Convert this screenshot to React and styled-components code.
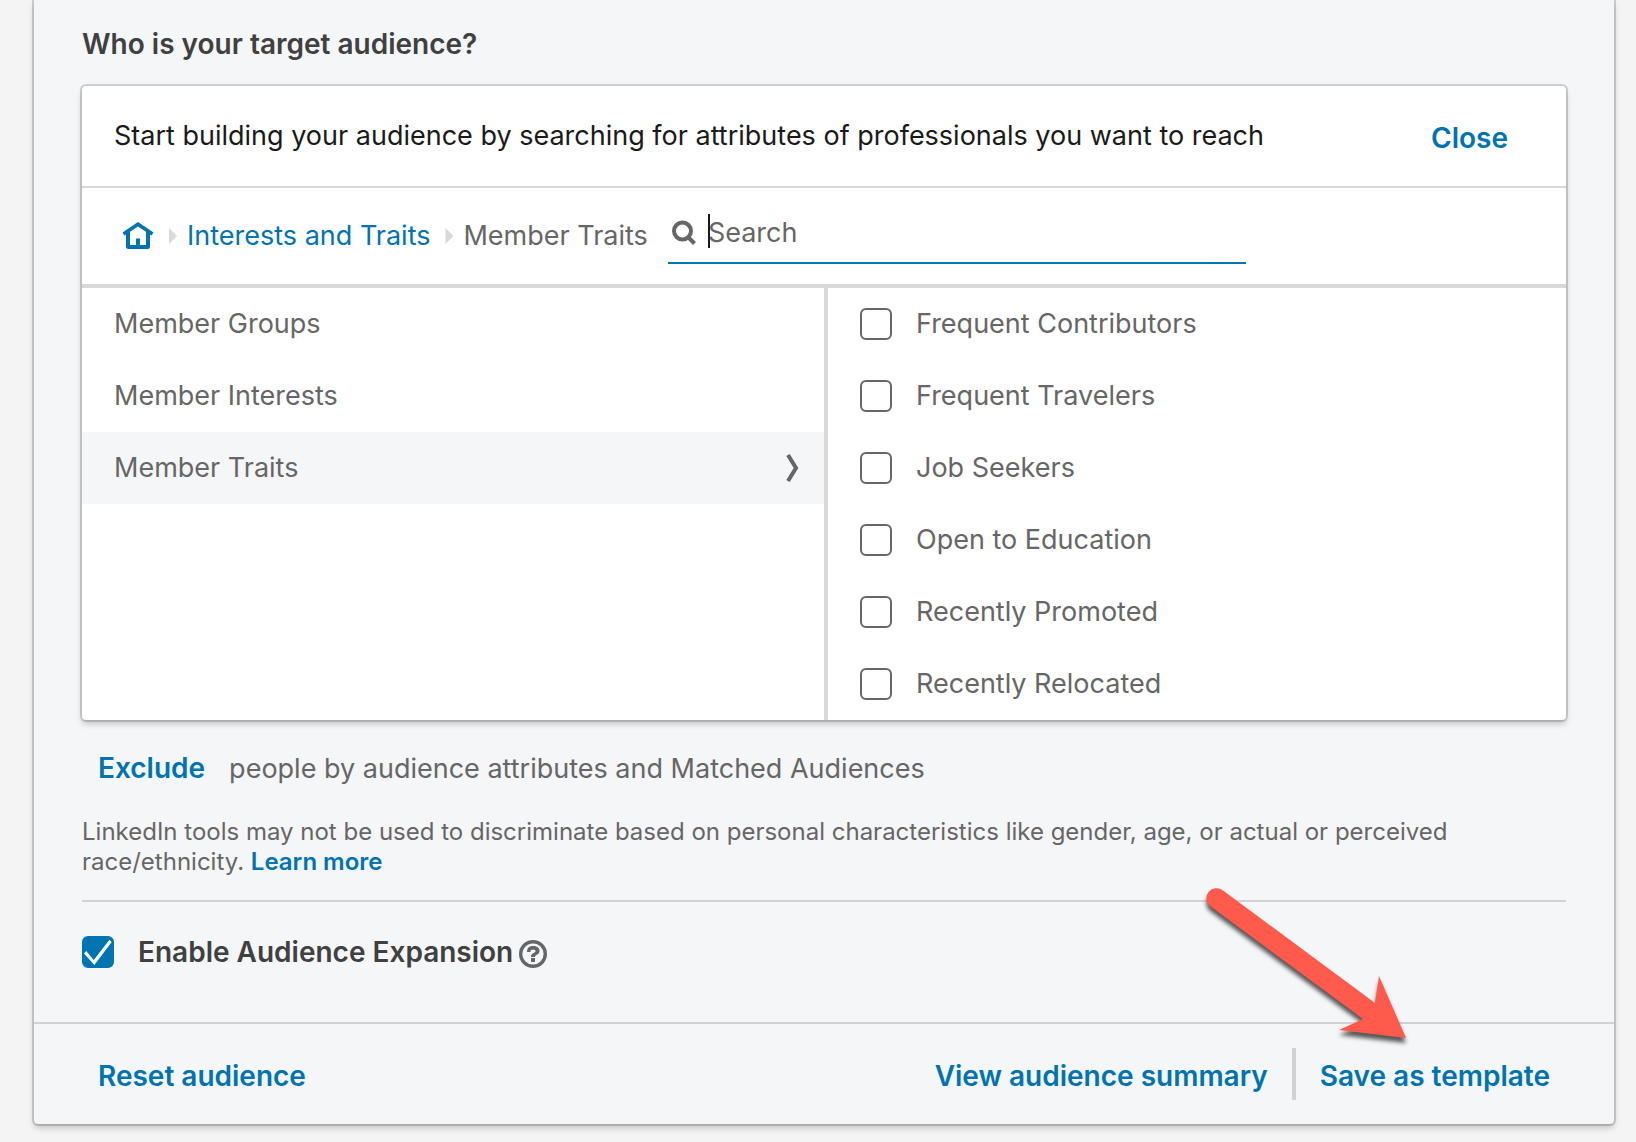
import React, { useState } from 'react';
import styled, { createGlobalStyle } from 'styled-components';

const GlobalStyle = createGlobalStyle`
  * {
    box-sizing: border-box;
  }
  body {
    margin: 0;
    background: #f4f4f4;
    color: #666;
    font-family: Inter, 'Liberation Sans', sans-serif;
    font-size: 27px;
    line-height: 36px;
  }
`;

const Page = styled.div`
  padding: 0 22px 18px 34px;
`;
const Panel = styled.main`
  position: relative;
  background: #f5f6f8;
  border-radius: 0 0 4px 4px;
  box-shadow: 0 0 0 2px rgba(0, 0, 0, .15), 0 4px 6px rgba(0, 0, 0, .2);
`;
const Body = styled.section`
  padding: 26px 48px 52px;
`;
const Title = styled.h2`
  margin: 0 0 24px;
  color: #404040;
  font-size: 28px;
  font-weight: 600;
  line-height: 36px;
`;
const Card = styled.div`
  background: #fff;
  border-radius: 4px;
  box-shadow: 0 0 0 2px rgba(0, 0, 0, .15), 0 4px 6px rgba(0, 0, 0, .2);
`;
const CardHeader = styled.div`
  display: flex;
  align-items: center;
  justify-content: space-between;
  height: 102px;
  padding: 0 58px 0 32px;
  border-bottom: 2px solid #d9d9d9;
  color: #1a1a1a;
`;
const TextButton = styled.button`
  padding: 4px 0 0;
  border: 0;
  background: none;
  color: #0073b1;
  font: inherit;
  font-size: 28px;
  font-weight: 600;
  cursor: pointer;
`;
const Toolbar = styled.div`
  display: flex;
  align-items: center;
  height: 100px;
  padding: 0 32px 0 40px;
  border-bottom: 4px solid #d9d9d9;
`;
const Breadcrumb = styled.nav`
  display: flex;
  align-items: center;
  flex: none;
  margin-right: 20px;
`;
const Crumb = styled.a`
  display: flex;
  color: #0073b1;
  text-decoration: none;
`;
const Separator = styled.span`
  width: 8px;
  height: 16px;
  margin: 0 10px 0 15px;
  background: #d9d9d9;
  clip-path: polygon(0 0, 100% 50%, 0 100%);
`;
const SearchField = styled.label`
  position: relative;
  display: flex;
  align-items: center;
  width: 578px;
  height: 56px;
  padding: 0 4px 4px 2px;
  border-bottom: 2px solid #0073b1;
`;
const SearchInput = styled.input`
  flex: 1;
  min-width: 0;
  margin-left: 10px;
  padding: 0;
  border: 0;
  outline: none;
  background: none;
  color: #1a1a1a;
  font: inherit;
  caret-color: transparent;

  &::placeholder {
    color: #666;
    opacity: 1;
  }
`;
const Caret = styled.span`
  position: absolute;
  left: 40px;
  top: 6px;
  width: 2px;
  height: 34px;
  background: #1a1a1a;
`;
const Columns = styled.div`
  display: grid;
  grid-template-columns: 1fr calc(50% - 4px);
`;
const Categories = styled.div`
  border-right: 4px solid #d9d9d9;
`;
const Category = styled.button`
  display: flex;
  align-items: center;
  justify-content: space-between;
  width: 100%;
  height: 72px;
  padding: 0 24px 0 32px;
  border: 0;
  background: ${props => (props.$active ? '#f5f6f8' : 'none')};
  color: inherit;
  font: inherit;
  text-align: left;
  cursor: pointer;
`;
const Option = styled.label`
  display: flex;
  align-items: center;
  gap: 24px;
  height: 72px;
  padding-left: 32px;
  cursor: pointer;
`;
const Checkbox = styled.input`
  display: grid;
  flex: none;
  width: 32px;
  height: 32px;
  margin: 0;
  border: 2px solid #666;
  border-radius: 6px;
  appearance: none;
  cursor: pointer;

  &:checked {
    border-color: #0073b1;
    background: #0073b1;
  }
  &:checked::before {
    content: '';
    background: #fff;
    clip-path: polygon(0 55%, 8% 46%, 35% 79%, 91% 6%, 99% 14%, 37% 96%);
  }
`;
const Exclude = styled.p`
  display: flex;
  align-items: baseline;
  gap: 24px;
  margin: 26px 0 0;
  padding-left: 16px;
`;
const Notice = styled.p`
  margin: 30px 0 0;
  padding-bottom: 23px;
  border-bottom: 2px solid #d0d2d3;
  font-size: 24px;
  line-height: 30px;
`;
const NoticeLink = styled.a`
  color: #0073b1;
  font-weight: 600;
  text-decoration: none;
`;
const Expansion = styled.div`
  display: flex;
  align-items: center;
  gap: 6px;
  margin-top: 32px;
`;
const ExpansionLabel = styled.label`
  display: flex;
  align-items: center;
  gap: 24px;
  color: #404040;
  font-size: 28px;
  font-weight: 600;
`;
const IconButton = styled.button`
  display: flex;
  padding: 4px 0 0;
  border: 0;
  background: none;
  color: #666;
  cursor: pointer;
`;
const Footer = styled.footer`
  display: flex;
  align-items: center;
  justify-content: space-between;
  height: 102px;
  padding: 0 64px;
  border-top: 2px solid #d0d2d3;
`;
const FooterActions = styled.div`
  display: flex;
  align-items: center;
`;
const Divider = styled.span`
  width: 4px;
  height: 52px;
  margin: 0 24px;
  background: #d0d2d3;
`;
const Arrow = styled.svg`
  position: absolute;
  right: 188px;
  bottom: 66px;
  filter: drop-shadow(0 5px 2px rgba(0, 0, 0, .65));
  pointer-events: none;
`;

const CATEGORIES = ['Member Groups', 'Member Interests', 'Member Traits'];
const TRAITS = [
  'Frequent Contributors',
  'Frequent Travelers',
  'Job Seekers',
  'Open to Education',
  'Recently Promoted',
  'Recently Relocated',
];

const HomeIcon = () => (
  <svg width="32" height="28" viewBox="0 0 32 28" fill="currentColor" aria-hidden="true">
    <path fillRule="evenodd" d="M16 0L31.500 10.500L29.500 13.500L28 12.600V24.500Q28 27 25.500 27H6.500Q4 27 4 24.500V12.600L2.500 13.500L0.500 10.500ZM16 4.500L8 9.800V23H14V16.500H18V23H24V9.800Z" />
  </svg>
);

const SearchIcon = () => (
  <svg width="28" height="28" viewBox="0 0 28 28" fill="none" stroke="#666" aria-hidden="true">
    <circle cx="12.500" cy="12" r="8.500" strokeWidth="4" />
    <path d="M17.500 17.500L24.500 24.500" strokeWidth="4" />
  </svg>
);

const ChevronIcon = () => (
  <svg width="16" height="28" viewBox="0 0 16 28" fill="none" stroke="#666" strokeWidth="4" aria-hidden="true">
    <path d="M4 1L12 14L4 27" />
  </svg>
);

const HelpIcon = () => (
  <svg width="28" height="28" viewBox="0 0 28 28" fill="none" stroke="currentColor" aria-hidden="true">
    <circle cx="14" cy="14" r="12.300" strokeWidth="3.400" />
    <path d="M8 12H11.500C11.500 10 12 9.800 14 9.800C16 9.800 16.500 10.200 16.500 11.200C16.500 13 12 12.500 12 17H16C16 14.500 20.500 14.800 20.500 11C20.500 7.500 18 6 14 6C10 6 8 8 8 12Z" fill="currentColor" stroke="none" />
    <path d="M12 20H16" strokeWidth="4" />
  </svg>
);

export default function App() {
  const [category, setCategory] = useState('Member Traits');
  const [query, setQuery] = useState('');
  const [expanded, setExpanded] = useState(true);

  return (
    <>
      <GlobalStyle />
      <Page>
        <Panel>
          <Body>
            <Title>Who is your target audience?</Title>
            <Card>
              <CardHeader>
                <span>Start building your audience by searching for attributes of professionals you want to reach</span>
                <TextButton type="button">Close</TextButton>
              </CardHeader>
              <Toolbar>
                <Breadcrumb aria-label="Breadcrumb">
                  <Crumb href="#home" aria-label="Home"><HomeIcon /></Crumb>
                  <Separator />
                  <Crumb href="#interests">Interests and Traits</Crumb>
                  <Separator />
                  <span>Member Traits</span>
                </Breadcrumb>
                <SearchField>
                  <SearchIcon />
                  <SearchInput
                    type="text"
                    placeholder="Search"
                    aria-label="Search"
                    value={query}
                    onChange={e => setQuery(e.target.value)}
                  />
                  {!query && <Caret />}
                </SearchField>
              </Toolbar>
              <Columns>
                <Categories>
                  {CATEGORIES.map(name => (
                    <Category
                      key={name}
                      type="button"
                      $active={name === category}
                      onClick={() => setCategory(name)}
                    >
                      {name}
                      {name === category && <ChevronIcon />}
                    </Category>
                  ))}
                </Categories>
                <div>
                  {TRAITS.map(name => (
                    <Option key={name}>
                      <Checkbox type="checkbox" />
                      {name}
                    </Option>
                  ))}
                </div>
              </Columns>
            </Card>
            <Exclude>
              <TextButton type="button">Exclude</TextButton>
              <span>people by audience attributes and Matched Audiences</span>
            </Exclude>
            <Notice>
              LinkedIn tools may not be used to discriminate based on personal characteristics like
              gender, age, or actual or perceived race/ethnicity.
              {' '}
              <NoticeLink href="#learn-more">Learn more</NoticeLink>
            </Notice>
            <Expansion>
              <ExpansionLabel>
                <Checkbox
                  type="checkbox"
                  checked={expanded}
                  onChange={e => setExpanded(e.target.checked)}
                />
                Enable Audience Expansion
              </ExpansionLabel>
              <IconButton type="button" aria-label="Help"><HelpIcon /></IconButton>
            </Expansion>
          </Body>
          <Footer>
            <TextButton type="button">Reset audience</TextButton>
            <FooterActions>
              <TextButton type="button">View audience summary</TextButton>
              <Divider />
              <TextButton type="button">Save as template</TextButton>
            </FooterActions>
          </Footer>
          <Arrow width="230" height="180" viewBox="0 0 230 180" fill="#ff5a4c" aria-hidden="true">
            <path d="M27 12.500L179 125L183 98L210 160L143 152L167 141L14 28A10 10 0 0 1 27 12.500Z" />
          </Arrow>
        </Panel>
      </Page>
    </>
  );
}
